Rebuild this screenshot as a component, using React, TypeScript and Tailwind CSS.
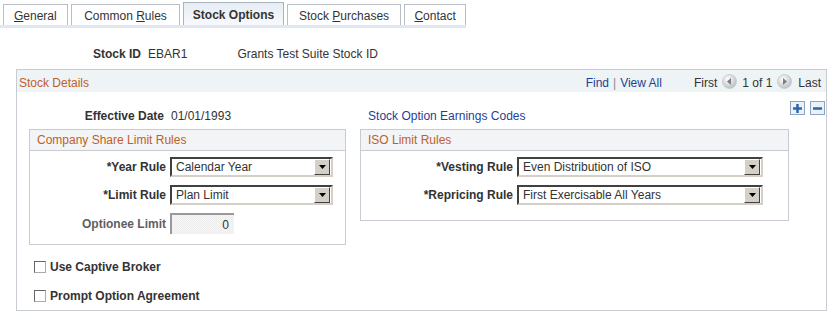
import React from "react";

const font = { fontFamily: '"Liberation Sans", Arial, sans-serif' };

function Tab({ w, active, children }: { w: number; active?: boolean; children: React.ReactNode }) {
  return (
    <div
      className={
        "flex items-center justify-center border border-b-0 pt-[2px] text-[12px] " +
        (active
          ? "h-[23px] border-[#aab4be] bg-gradient-to-b from-[#e6edf5] to-[#f7f9fc] font-bold text-[#333]"
          : "mt-[2px] h-[21px] border-[#b8bec4] bg-white text-[#333]")
      }
      style={{ width: w }}
    >
      {children}
    </div>
  );
}

function Select({ w, value }: { w: number; value: string }) {
  return (
    <div
      className="flex h-[20px] items-center border-2 border-t-[#404040] border-l-[#404040] border-r-[#d4d0c8] border-b-[#d4d0c8] bg-white"
      style={{ width: w }}
    >
      <span className="flex-1 pl-[4px] text-[12px] text-[#333] leading-none">{value}</span>
      <div className="mr-[1px] flex h-[16px] w-[16px] items-center justify-center border border-t-white border-l-white border-r-[#404040] border-b-[#404040] bg-[#d4d0c8]">
        <svg width="7" height="4" viewBox="0 0 7 4">
          <polygon points="0,0 7,0 3.5,4" fill="#000" />
        </svg>
      </div>
    </div>
  );
}

function NavArrow({ dir }: { dir: "left" | "right" }) {
  return (
    <svg width="15" height="15" viewBox="0 0 15 15">
      <defs>
        <radialGradient id={"g" + dir} cx="40%" cy="35%" r="70%">
          <stop offset="0%" stopColor="#ffffff" />
          <stop offset="100%" stopColor="#b8bcc0" />
        </radialGradient>
      </defs>
      <circle cx="7.5" cy="7.5" r="7" fill={"url(#g" + dir + ")"} stroke="#c4c8cc" strokeWidth="0.8" />
      {dir === "left" ? (
        <polygon points="9,4 9,11 5,7.5" fill="#7a7e82" />
      ) : (
        <polygon points="6,4 6,11 10,7.5" fill="#7a7e82" />
      )}
    </svg>
  );
}

function Checkbox({ label }: { label: string }) {
  return (
    <div className="flex h-[29px] items-center">
      <div className="ml-[17px] h-[12px] w-[12px] border border-t-[#666] border-l-[#666] border-r-[#aaa] border-b-[#aaa] bg-white" />
      <span className="ml-[4px] text-[12px] font-bold text-[#333]">{label}</span>
    </div>
  );
}

export default function App() {
  return (
    <div className="h-[318px] w-[838px] bg-white text-[#333]" style={font}>
      {/* Tabs */}
      <div className="flex w-[466px] gap-[3px] border-b-[3px] border-[#dfe8f2] pl-[3px] pt-[2px]">
        <Tab w={65}>
          <span><u>G</u>eneral</span>
        </Tab>
        <Tab w={110}>
          <span>Common <u>R</u>ules</span>
        </Tab>
        <Tab w={101} active>
          <span>Stock Options</span>
        </Tab>
        <Tab w={115}>
          <span>Stock <u>P</u>urchases</span>
        </Tab>
        <Tab w={62}>
          <span><u>C</u>ontact</span>
        </Tab>
      </div>

      {/* Stock ID */}
      <div className="mt-[19px] flex h-[14px] items-center text-[12px]">
        <span className="ml-[93px] font-bold">Stock ID</span>
        <span className="ml-[7px]">EBAR1</span>
        <span className="ml-[50px]">Grants Test Suite Stock ID</span>
      </div>

      {/* Stock Details box */}
      <div className="ml-[16px] mt-[8px] h-[242px] w-[811px] border border-[#c6ccd2]">
        <div className="flex h-[22px] items-center bg-[#eef3f5] pt-[3px] text-[12px]">
          <span className="ml-[2px] text-[#c05e2a]">Stock Details</span>
          <span className="ml-auto text-[#1f3f96]">Find</span>
          <span className="mx-[4px] text-[#888]">|</span>
          <span className="text-[#1f3f96]">View All</span>
          <span className="ml-[32px] text-[#333]">First</span>
          <span className="ml-[5px] mt-[-3px] flex"><NavArrow dir="left" /></span>
          <span className="ml-[5px] text-[#333]">1 of 1</span>
          <span className="ml-[5px] mt-[-3px] flex"><NavArrow dir="right" /></span>
          <span className="ml-[6px] mr-[5px] text-[#333]">Last</span>
        </div>

        <div className="flex h-[37px] items-start text-[12px]">
          <div className="flex w-[147px] justify-end pt-[15px] font-bold">Effective Date</div>
          <div className="ml-[7px] pt-[15px]">01/01/1993</div>
          <div className="ml-[137px] pt-[15px] text-[#1f3f96]">Stock Option Earnings Codes</div>
          <div className="ml-auto mr-[1px] flex gap-[5px] pt-[9px]">
            <div className="flex h-[14px] w-[15px] items-center justify-center border border-[#8aa6c2] bg-[#eaf1f8]">
              <svg width="11" height="11" viewBox="0 0 11 11">
                <rect x="4.25" y="1" width="2.5" height="9" fill="#2f66a8" />
                <rect x="1" y="4.25" width="9" height="2.5" fill="#2f66a8" />
              </svg>
            </div>
            <div className="flex h-[14px] w-[15px] items-center justify-center border border-[#8aa6c2] bg-[#eaf1f8]">
              <svg width="11" height="11" viewBox="0 0 11 11">
                <rect x="1" y="4.25" width="9" height="2.5" fill="#2f66a8" />
              </svg>
            </div>
          </div>
        </div>

        <div className="ml-[12px] flex items-start gap-[14px] text-[12px]">
          {/* Company Share Limit Rules */}
          <div className="h-[116px] w-[317px] border border-[#c6ccd2]">
            <div className="flex h-[21px] items-center border-b border-[#c6ccd2] bg-[#f2f4f6] pl-[7px] text-[#c05e2a]">
              Company Share Limit Rules
            </div>
            <div className="flex flex-col gap-[8px] pt-[6px]">
              <div className="flex items-center">
                <div className="w-[136px] text-right font-bold">*Year Rule</div>
                <div className="ml-[4px]"><Select w={163} value="Calendar Year" /></div>
              </div>
              <div className="flex items-center">
                <div className="w-[136px] text-right font-bold">*Limit Rule</div>
                <div className="ml-[4px]"><Select w={163} value="Plan Limit" /></div>
              </div>
              <div className="flex items-center">
                <div className="w-[136px] text-right font-bold text-[#5f5f5f]">Optionee Limit</div>
                <div
                  className="ml-[4px] flex h-[21px] w-[64px] items-center justify-end border-l-2 border-t-2 border-l-[#999] border-t-[#999] pr-[5px] text-[#333]"
                  style={{
                    backgroundColor: "#f2f2f2",
                    backgroundImage:
                      "repeating-conic-gradient(#ececec 0% 25%, #f7f7f7 0% 50%)",
                    backgroundSize: "2px 2px",
                  }}
                >
                  0
                </div>
              </div>
            </div>
          </div>

          {/* ISO Limit Rules */}
          <div className="h-[92px] w-[429px] border border-[#c6ccd2]">
            <div className="flex h-[21px] items-center border-b border-[#c6ccd2] bg-[#f2f4f6] pl-[7px] text-[#c05e2a]">
              ISO Limit Rules
            </div>
            <div className="flex flex-col gap-[8px] pt-[6px]">
              <div className="flex items-center">
                <div className="w-[152px] text-right font-bold">*Vesting Rule</div>
                <div className="ml-[4px]"><Select w={246} value="Even Distribution of ISO" /></div>
              </div>
              <div className="flex items-center">
                <div className="w-[152px] text-right font-bold">*Repricing Rule</div>
                <div className="ml-[4px]"><Select w={246} value="First Exercisable All Years" /></div>
              </div>
            </div>
          </div>
        </div>

        <div className="mt-[7px]">
          <Checkbox label="Use Captive Broker" />
          <Checkbox label="Prompt Option Agreement" />
        </div>
      </div>
    </div>
  );
}
